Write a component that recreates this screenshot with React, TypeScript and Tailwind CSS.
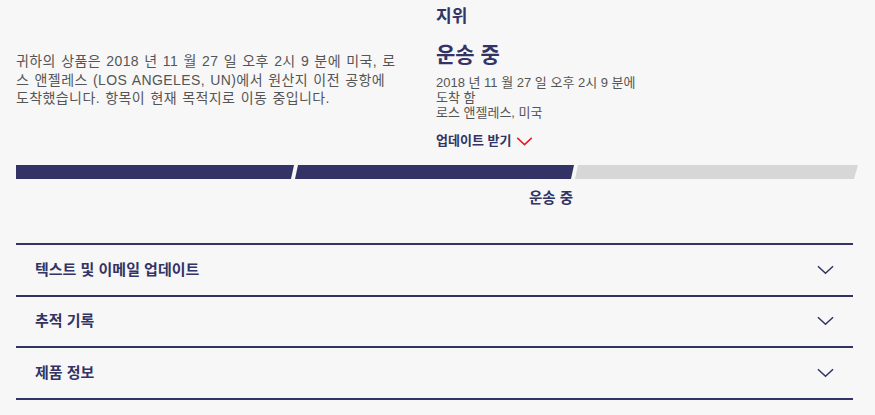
const rows = ['텍스트 및 이메일 업데이트', '추적 기록', '제품 정보']

function Chevron({ className }: { className?: string }) {
  return (
    <svg viewBox="0 0 18 10" className={className} fill="none" stroke="currentColor" strokeWidth="1.6">
      <path d="M1 1l8 7.5L17 1" />
    </svg>
  )
}

export default function App() {
  return (
    <div className="min-h-screen w-[875px] bg-[#f7f7f7] font-['Liberation_Sans','Noto_Sans_CJK_KR',sans-serif] text-[#333366]">
      {/* Summary + status */}
      <section className="flex px-4">
        <div className="w-[420px] pt-[52px]">
          <p className="whitespace-nowrap text-[14px] leading-[18.5px] text-[#555] tracking-[0.4px] [word-spacing:1px]">
            귀하의 상품은 2018 년 11 월 27 일 오후 2시 9 분에 미국, 로
            <br />
            스 앤젤레스 (LOS ANGELES, UN)에서 원산지 이전 공항에
            <br />
            도착했습니다. 항목이 현재 목적지로 이동 중입니다.
          </p>
        </div>
        <div className="pt-[7px]">
          <h3 className="text-[17px] leading-[20px] font-bold">지위</h3>
          <h2 className="mt-[15px] text-[21px] leading-[25px] font-bold">운송 중</h2>
          <p className="mt-[8px] text-[13px] leading-[15px] text-[#555]">
            2018 년 11 월 27 일 오후 2시 9 분에
            <br />
            도착 함
            <br />
            로스 앤젤레스, 미국
          </p>
          <button className="mt-[13px] flex items-center gap-[5px] text-[13px] leading-[16px] font-bold text-[#333366]">
            업데이트 받기
            <Chevron className="h-[9px] w-[17px] text-[#e71921]" />
          </button>
        </div>
      </section>

      {/* Progress bar */}
      <section className="mt-[16px] px-4">
        <div className="flex h-[14px]">
          <div className="w-[278px] bg-[#333366] [clip-path:polygon(0_0,100%_0,calc(100%-3px)_100%,0_100%)]" />
          <div className="ml-[1px] w-[279px] bg-[#333366] [clip-path:polygon(3px_0,100%_0,calc(100%-3px)_100%,0_100%)]" />
          <div className="ml-[1px] w-[283px] bg-[#d7d7d7] [clip-path:polygon(3px_0,100%_0,calc(100%-4px)_100%,0_100%)]" />
        </div>
        <p className="mt-[11px] pl-[513px] text-[14.5px] leading-[17px] font-semibold">운송 중</p>
      </section>

      {/* Accordions */}
      <section className="mt-[36px] w-[853px] pl-4">
        {rows.map((r) => (
          <div key={r} className="flex h-[51.5px] items-center justify-between border-t-2 border-[#333366] pl-[19px] pr-[19px]">
            <span className="text-[15px] font-bold">{r}</span>
            <Chevron className="h-[10px] w-[17px] text-[#333366]" />
          </div>
        ))}
        <div className="border-t-2 border-[#333366]" />
      </section>
    </div>
  )
}
